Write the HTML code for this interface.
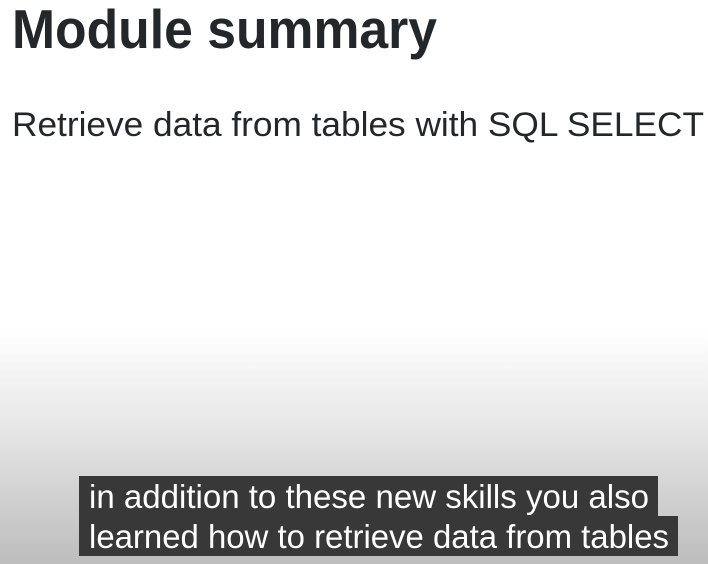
<!DOCTYPE html>
<html><head><meta charset="utf-8"><style>
html,body{margin:0;padding:0;width:708px;height:564px;overflow:hidden}
body{background:linear-gradient(to bottom,#fff 0px,#fff 330px,#e6e6e6 430px,#d0d0d0 500px,#bdbdbd 564px)}
svg{position:absolute;left:0;top:0}
</style></head><body>
<svg width="708" height="564" xmlns="http://www.w3.org/2000/svg">
<text x="12" y="48" font-family="Liberation Sans, sans-serif" font-weight="bold" font-size="55" fill="#23272a" textLength="425" lengthAdjust="spacingAndGlyphs">Module summary</text>
<text x="12" y="136" font-family="Liberation Sans, sans-serif" font-size="34" fill="#23272a" textLength="692" lengthAdjust="spacingAndGlyphs">Retrieve data from tables with SQL SELECT</text>
<rect x="79" y="476" width="579" height="41" fill="#383838"/>
<rect x="79" y="516" width="599" height="40" fill="#383838"/>
<text x="89" y="508" font-family="Liberation Sans, sans-serif" font-size="33" fill="#fff" textLength="560" lengthAdjust="spacingAndGlyphs">in addition to these new skills you also</text>
<text x="89" y="548" font-family="Liberation Sans, sans-serif" font-size="33" fill="#fff" textLength="580" lengthAdjust="spacingAndGlyphs">learned how to retrieve data from tables</text>
</svg>
</body></html>
